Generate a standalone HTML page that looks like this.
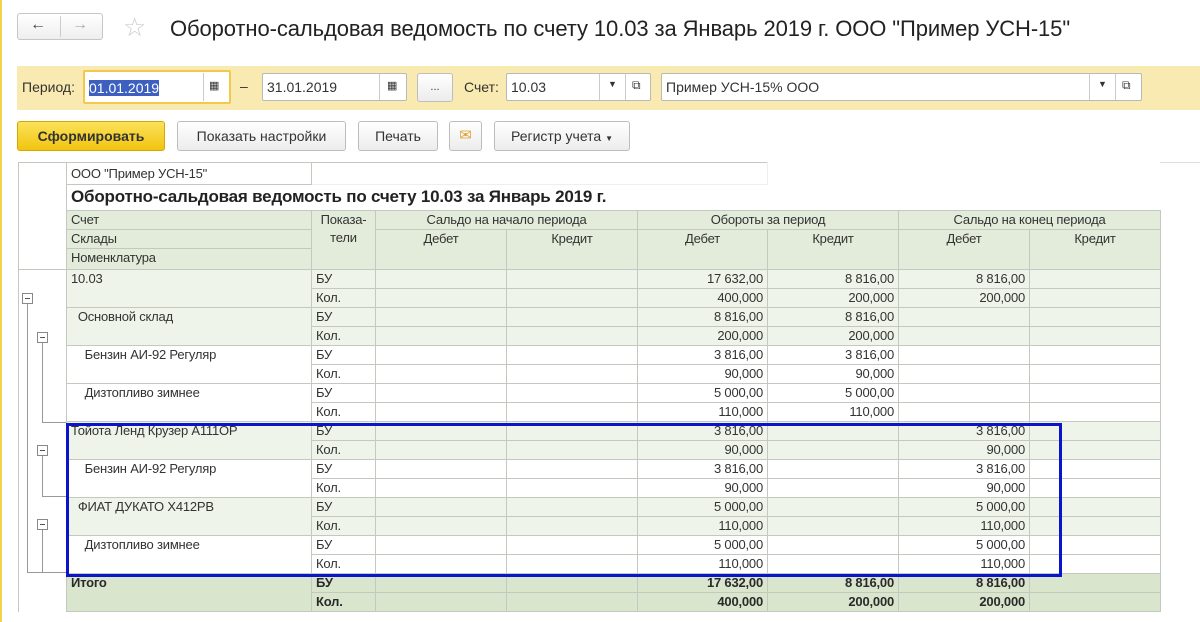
<!DOCTYPE html>
<html><head><meta charset="utf-8"><style>
*{box-sizing:border-box}
body{margin:0;width:1200px;height:622px;background:#fff;font-family:"Liberation Sans",Arial,sans-serif;color:#333;position:relative;overflow:hidden}
.a{position:absolute}
.inp{position:absolute;top:73px;height:28px;background:#fff;border:1px solid #b9b9b9;border-radius:2px;font-size:14px;line-height:26px;padding-left:4px;color:#333}
.btn{position:absolute;top:121px;height:30px;border:1px solid #bdbdbd;border-radius:3px;background:linear-gradient(#fff,#ececec);font-size:14px;line-height:28px;text-align:center;color:#333}
table{position:absolute;left:18px;top:162px;border-collapse:collapse;table-layout:fixed;font-size:13px;letter-spacing:-0.2px}
td{border:1px solid #c4c9c0;height:19px;padding:0 4px;white-space:nowrap;overflow:visible;vertical-align:top;line-height:17px}
.h{background:#e3ecda;color:#333}
.g{background:#eef4ea}
.w{background:#fff}
.t{background:#d9e6cd;font-weight:bold;color:#2a2a2a}
.r{text-align:right}
.c{text-align:center}
td.tree{border:none;border-left:1px solid #c4c9c0;border-right:1px solid #c4c9c0;background:#fff}
.mb{position:absolute;width:11px;height:11px;border:1px solid #888;background:#fff}
.mb:after{content:"";position:absolute;left:2px;right:2px;top:4px;border-top:1px solid #555}
</style></head><body>
<div class="a" style="left:0;top:0;width:2px;height:622px;background:#f2d44c"></div>
<div class="a" style="left:17px;top:13px;width:86px;height:27px;border:1px solid #c6c6c6;border-radius:3px;background:linear-gradient(#fff,#eee)"></div>
<div class="a" style="left:60px;top:16px;height:21px;border-left:1px solid #ccc"></div>
<div class="a" style="left:30px;top:16px;font-size:16px;color:#444">&#8592;</div>
<div class="a" style="left:72px;top:16px;font-size:16px;color:#aaa">&#8594;</div>
<div class="a" style="left:123px;top:12px;font-size:26px;color:#ccc">&#9734;</div>
<div class="a" style="left:170px;top:16px;font-size:22px;color:#222;white-space:nowrap;letter-spacing:-0.1px">Оборотно-сальдовая ведомость по счету 10.03 за Январь 2019 г. ООО "Пример УСН-15"</div>
<div class="a" style="left:17px;top:66px;width:1183px;height:44px;background:#f8eab0"></div>
<div class="a" style="left:22px;top:79px;font-size:14px">Период:</div>
<div class="inp" style="left:83px;top:70px;width:148px;height:34px;border:2px solid #f3c94d;padding-top:3px"><span style="background:#3d5fc0;color:#fff">01.01.2019</span></div>
<div class="a" style="left:203px;top:73px;height:28px;border-left:1px solid #ccc"></div>
<div class="a" style="left:209px;top:79px;font-size:11px">&#9638;</div>
<div class="a" style="left:240px;top:78px;font-size:14px">–</div>
<div class="inp" style="left:262px;width:145px">31.01.2019</div>
<div class="a" style="left:379px;top:74px;height:26px;border-left:1px solid #ccc"></div>
<div class="a" style="left:387px;top:79px;font-size:11px">&#9638;</div>
<div class="btn" style="left:417px;top:73px;width:36px;height:29px;line-height:26px;font-size:11px">...</div>
<div class="a" style="left:464px;top:79px;font-size:14px">Счет:</div>
<div class="inp" style="left:506px;width:145px">10.03</div>
<div class="a" style="left:599px;top:74px;height:26px;border-left:1px solid #ccc"></div>
<div class="a" style="left:625px;top:74px;height:26px;border-left:1px solid #ccc"></div>
<div class="a" style="left:608px;top:79px;font-size:9px">&#9660;</div>
<div class="a" style="left:632px;top:78px;font-size:12px">&#10697;</div>
<div class="inp" style="left:661px;width:481px">Пример УСН-15% ООО</div>
<div class="a" style="left:1089px;top:74px;height:26px;border-left:1px solid #ccc"></div>
<div class="a" style="left:1115px;top:74px;height:26px;border-left:1px solid #ccc"></div>
<div class="a" style="left:1098px;top:79px;font-size:9px">&#9660;</div>
<div class="a" style="left:1122px;top:78px;font-size:12px">&#10697;</div>
<div class="btn" style="left:17px;width:148px;background:linear-gradient(#fbe25a,#f1c40f);border-color:#d5a800;font-weight:bold;color:#333">Сформировать</div>
<div class="btn" style="left:177px;width:169px">Показать настройки</div>
<div class="btn" style="left:358px;width:80px">Печать</div>
<div class="btn" style="left:449px;width:33px;color:#e0a030;font-size:15px">&#9993;</div>
<div class="btn" style="left:494px;width:136px">Регистр учета <span style="font-size:8px">&#9660;</span></div>
<div class="a" style="left:1160px;top:162px;width:40px;height:460px;border-top:1px solid #ddd"></div>
<table>
<colgroup><col style="width:48px"><col style="width:245px"><col style="width:64px"><col style="width:131px"><col style="width:131px"><col style="width:130px"><col style="width:131px"><col style="width:131px"><col style="width:131px"></colgroup>
<tr><td class="tree" rowspan="5" style="border:1px solid #c4c9c0"></td><td style="height:22px;padding-top:2px">ООО "Пример УСН-15"</td><td colspan="4" style="border-bottom:1px solid #eee;border-right:1px solid #eee"></td><td colspan="3" style="border:none"></td></tr>
<tr><td colspan="8" style="height:26px;font-size:17px;font-weight:bold;color:#222;line-height:24px;border-top:none;border-right:none">Оборотно-сальдовая ведомость по счету 10.03 за Январь 2019 г.</td></tr>
<tr><td class="h">Счет</td><td class="h c" rowspan="3" style="line-height:18px">Показа-<br>тели</td><td class="h c" colspan="2">Сальдо на начало периода</td><td class="h c" colspan="2">Обороты за период</td><td class="h c" colspan="2">Сальдо на конец периода</td></tr>
<tr><td class="h">Склады</td><td class="h c" rowspan="2">Дебет</td><td class="h c" rowspan="2">Кредит</td><td class="h c" rowspan="2">Дебет</td><td class="h c" rowspan="2">Кредит</td><td class="h c" rowspan="2">Дебет</td><td class="h c" rowspan="2">Кредит</td></tr>
<tr><td class="h" style="height:21px">Номенклатура</td></tr>

<tr><td class="tree" rowspan="18"></td><td class="g" rowspan="2">10.03</td><td class="g">БУ</td><td class="g"></td><td class="g"></td><td class="g r">17 632,00</td><td class="g r">8 816,00</td><td class="g r">8 816,00</td><td class="g"></td></tr>
<tr><td class="g">Кол.</td><td class="g"></td><td class="g"></td><td class="g r">400,000</td><td class="g r">200,000</td><td class="g r">200,000</td><td class="g"></td></tr>
<tr><td class="g" rowspan="2">&nbsp;&nbsp;Основной склад</td><td class="g">БУ</td><td class="g"></td><td class="g"></td><td class="g r">8 816,00</td><td class="g r">8 816,00</td><td class="g"></td><td class="g"></td></tr>
<tr><td class="g">Кол.</td><td class="g"></td><td class="g"></td><td class="g r">200,000</td><td class="g r">200,000</td><td class="g"></td><td class="g"></td></tr>
<tr><td class="w" rowspan="2">&nbsp;&nbsp;&nbsp;&nbsp;Бензин АИ-92 Регуляр</td><td>БУ</td><td></td><td></td><td class="r">3 816,00</td><td class="r">3 816,00</td><td></td><td></td></tr>
<tr><td>Кол.</td><td></td><td></td><td class="r">90,000</td><td class="r">90,000</td><td></td><td></td></tr>
<tr><td class="w" rowspan="2">&nbsp;&nbsp;&nbsp;&nbsp;Дизтопливо зимнее</td><td>БУ</td><td></td><td></td><td class="r">5 000,00</td><td class="r">5 000,00</td><td></td><td></td></tr>
<tr><td>Кол.</td><td></td><td></td><td class="r">110,000</td><td class="r">110,000</td><td></td><td></td></tr>
<tr><td class="g" rowspan="2">Тойота Ленд Крузер А111ОР</td><td class="g">БУ</td><td class="g"></td><td class="g"></td><td class="g r">3 816,00</td><td class="g"></td><td class="g r">3 816,00</td><td class="g"></td></tr>
<tr><td class="g">Кол.</td><td class="g"></td><td class="g"></td><td class="g r">90,000</td><td class="g"></td><td class="g r">90,000</td><td class="g"></td></tr>
<tr><td class="w" rowspan="2">&nbsp;&nbsp;&nbsp;&nbsp;Бензин АИ-92 Регуляр</td><td>БУ</td><td></td><td></td><td class="r">3 816,00</td><td></td><td class="r">3 816,00</td><td></td></tr>
<tr><td>Кол.</td><td></td><td></td><td class="r">90,000</td><td></td><td class="r">90,000</td><td></td></tr>
<tr><td class="g" rowspan="2">&nbsp;&nbsp;ФИАТ ДУКАТО Х412РВ</td><td class="g">БУ</td><td class="g"></td><td class="g"></td><td class="g r">5 000,00</td><td class="g"></td><td class="g r">5 000,00</td><td class="g"></td></tr>
<tr><td class="g">Кол.</td><td class="g"></td><td class="g"></td><td class="g r">110,000</td><td class="g"></td><td class="g r">110,000</td><td class="g"></td></tr>
<tr><td class="w" rowspan="2">&nbsp;&nbsp;&nbsp;&nbsp;Дизтопливо зимнее</td><td>БУ</td><td></td><td></td><td class="r">5 000,00</td><td></td><td class="r">5 000,00</td><td></td></tr>
<tr><td>Кол.</td><td></td><td></td><td class="r">110,000</td><td></td><td class="r">110,000</td><td></td></tr>
<tr><td class="t" rowspan="2">Итого</td><td class="t">БУ</td><td class="t"></td><td class="t"></td><td class="t r">17 632,00</td><td class="t r">8 816,00</td><td class="t r">8 816,00</td><td class="t"></td></tr>
<tr><td class="t">Кол.</td><td class="t"></td><td class="t"></td><td class="t r">400,000</td><td class="t r">200,000</td><td class="t r">200,000</td><td class="t"></td></tr>
</table>
<div class="a" style="left:27px;top:303px;height:270px;border-left:1px solid #999"></div>
<div class="a" style="left:27px;top:572px;width:39px;border-top:1px solid #999"></div>
<div class="a" style="left:42px;top:343px;height:80px;border-left:1px solid #999"></div>
<div class="a" style="left:42px;top:422px;width:24px;border-top:1px solid #999"></div>
<div class="a" style="left:42px;top:456px;height:41px;border-left:1px solid #999"></div>
<div class="a" style="left:42px;top:496px;width:24px;border-top:1px solid #999"></div>
<div class="a" style="left:42px;top:530px;height:42px;border-left:1px solid #999"></div>
<div class="mb" style="left:22px;top:293px"></div>
<div class="mb" style="left:37px;top:332px"></div>
<div class="mb" style="left:37px;top:445px"></div>
<div class="mb" style="left:37px;top:519px"></div>
<div class="a" style="left:66px;top:423px;width:996px;height:154px;border:3px solid #0a14c8"></div>
</body></html>
